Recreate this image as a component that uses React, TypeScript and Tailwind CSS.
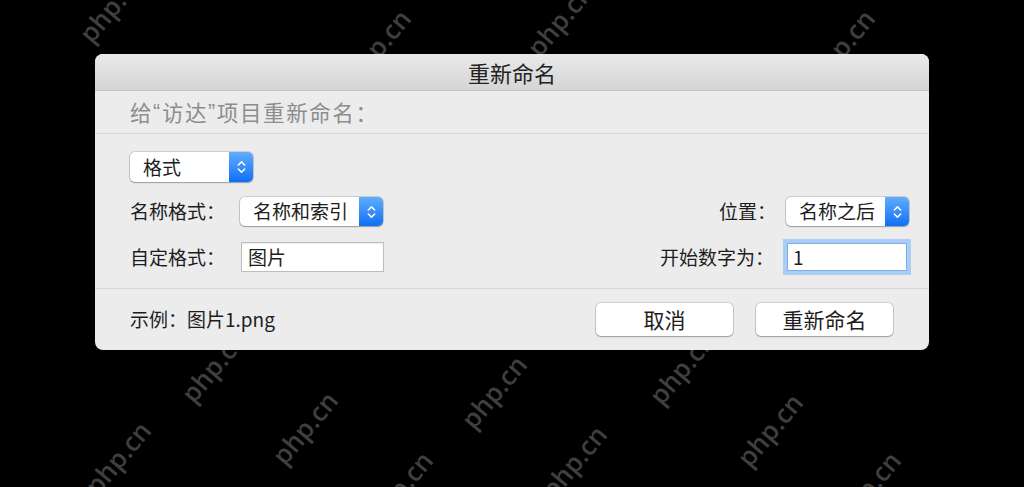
import React from "react";

// watermark centres, taken from the screenshot
const marks: [number, number][] = [
  [112, 6],
  [378, 46],
  [560, 20],
  [842, 46],
  [214, 366],
  [494, 392],
  [682, 368],
  [305, 428],
  [770, 430],
  [118, 458],
  [574, 462],
  [400, 488],
  [868, 488],
];

const Chevrons = () => (
  <svg width="11" height="16" viewBox="0 0 11 16" fill="none">
    <path d="M2.3 6 L5.5 2.9 L8.7 6" stroke="white" strokeWidth="1.5" strokeLinecap="round" strokeLinejoin="round" />
    <path d="M2.3 10 L5.5 13.1 L8.7 10" stroke="white" strokeWidth="1.5" strokeLinecap="round" strokeLinejoin="round" />
  </svg>
);

const PopUp = ({ label, width, height }: { label: string; width: string; height: string }) => (
  <div
    className={`flex items-stretch rounded-[5px] bg-white shadow-[0_0_0_1px_rgba(0,0,0,0.13),0_1px_1.5px_rgba(0,0,0,0.25)] ${width} ${height}`}
  >
    <span className="flex flex-1 items-center pl-[13px] text-[19px] text-[#1d1d1d]">{label}</span>
    <span className="flex w-[24px] items-center justify-center rounded-r-[5px] bg-linear-to-b from-[#5eadfd] to-[#0b6ef4]">
      <Chevrons />
    </span>
  </div>
);

const Button = ({ children }: { children: React.ReactNode }) => (
  <button className="flex h-[33px] w-[137px] items-center justify-center rounded-[5px] bg-white text-[21px] text-[#1d1d1d] shadow-[0_0_0_1px_rgba(0,0,0,0.12),0_1px_1.5px_rgba(0,0,0,0.25)]">
    {children}
  </button>
);

const Q = ({ children }: { children: string }) => (
  <span className="font-['Liberation_Sans',sans-serif]">{children}</span>
);

export default function App() {
  return (
    <div className="relative h-[487px] w-[1024px] overflow-hidden bg-black pl-[95px] pt-[54px] font-['Noto_Sans_CJK_SC','Liberation_Sans',sans-serif]">
      {marks.map(([x, y], i) => (
        <span
          key={i}
          className="pointer-events-none absolute -translate-x-1/2 -translate-y-1/2 -rotate-[50deg] whitespace-nowrap font-['Open_Sans',sans-serif] text-[26px] font-semibold text-white/25"
          style={{ left: x, top: y }}
        >
          php.cn
        </span>
      ))}

      <div className="relative z-10 flex h-[296px] w-[834px] flex-col overflow-hidden rounded-[8px] bg-[#ececec]">
        {/* title bar */}
        <div className="flex h-[37px] items-center justify-center border-b border-[#c4c4c4] bg-linear-to-b from-[#e9e9e9] to-[#d5d5d5] text-[22px] text-[#222]">
          重新命名
        </div>

        {/* heading */}
        <div className="flex h-[43px] items-center border-b border-[#d6d6d6] pl-[35px] text-[21.5px] tracking-[1.6px] text-[#8d8d8d]">
          给<Q>“</Q>访达<Q>”</Q>项目重新命名：
        </div>

        {/* body */}
        <div className="flex flex-col border-b border-[#d6d6d6] pb-[16px] pl-[35px] pr-[20px] pt-[18px]">
          <PopUp label="格式" width="w-[123px]" height="h-[30px]" />

          <div className="mt-[15px] flex h-[29px] items-center">
            <span className="w-[110px] text-[19px] text-[#1d1d1d]">名称格式：</span>
            <PopUp label="名称和索引" width="w-[143px]" height="h-[29px]" />
            <div className="flex-1" />
            <span className="mr-[10px] text-[19px] text-[#1d1d1d]">位置：</span>
            <PopUp label="名称之后" width="w-[123px]" height="h-[29px]" />
          </div>

          <div className="mt-[16px] flex h-[30px] items-center">
            <span className="w-[111px] text-[19px] text-[#1d1d1d]">自定格式：</span>
            <div className="flex h-[30px] w-[143px] items-center border border-[#bdbdbd] bg-white pl-[6px] text-[19px] text-[#1d1d1d] shadow-[inset_0_1px_1px_rgba(0,0,0,0.08)]">
              图片
            </div>
            <div className="flex-1" />
            <span className="mr-[13px] text-[19px] text-[#1d1d1d]">开始数字为：</span>
            <div className="mr-[2px] flex h-[28px] w-[120px] items-center border border-[#7eaee8] bg-white pl-[5px] text-[19px] text-[#1d1d1d] shadow-[0_0_0_4px_#a9cdf5]">
              1
            </div>
          </div>
        </div>

        {/* footer */}
        <div className="flex flex-1 items-center pl-[35px] pr-[36px]">
          <span className="text-[19px] text-[#1d1d1d]">示例：图片1.png</span>
          <div className="flex-1" />
          <div className="flex gap-[23px]">
            <Button>取消</Button>
            <Button>重新命名</Button>
          </div>
        </div>
      </div>
    </div>
  );
}
